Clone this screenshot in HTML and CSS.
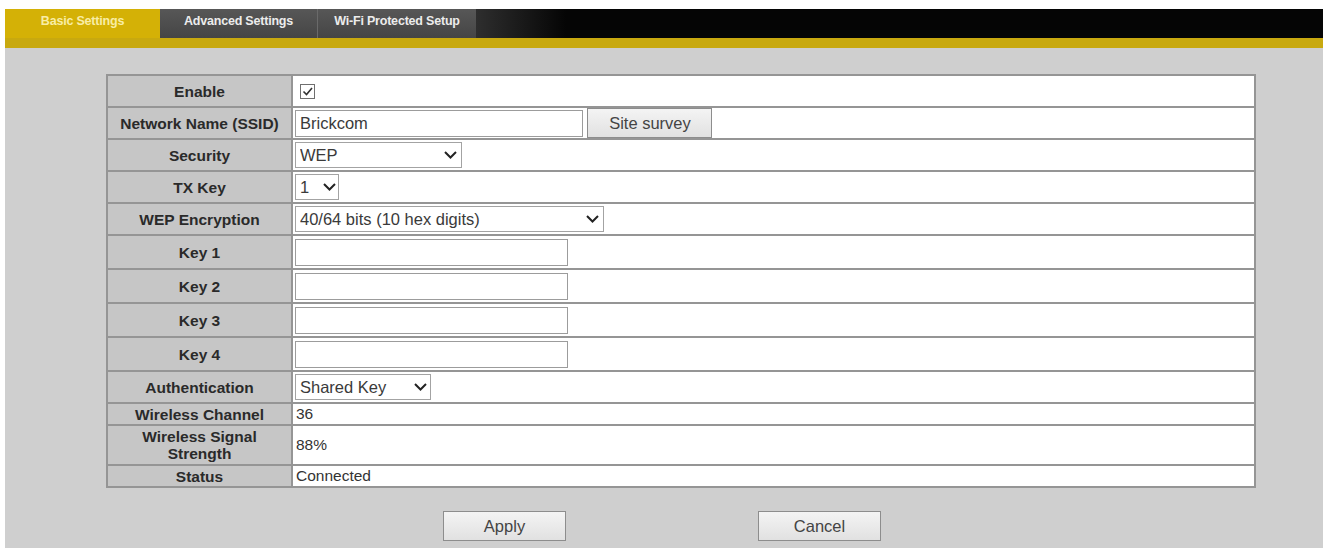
FILE: index.html
```html
<!DOCTYPE html>
<html lang="en">
  <head>
    <meta charset="UTF-8" />
    <title>Wireless - Basic Settings</title>
    <link rel="stylesheet" href="styles.css">
  </head>
  <body>
    <div class="tabs">
      <div class="tab tab-basic active">Basic Settings</div>
      <div class="tab tab-adv">Advanced Settings</div>
      <div class="tab tab-wps">Wi-Fi Protected Setup</div>
      <div class="tab-fill"></div>
    </div>

    <div class="panel">
      <table class="settings">
        <tr class="row-form">
          <th>Enable</th>
          <td>
            <span class="check">
              <svg width="13" height="13" viewBox="0 0 13 13">
                <path d="M2.5 6.5 L5.5 9.5 L11 3" fill="none" stroke="#333" stroke-width="1.6" />
              </svg>
            </span>
          </td>
        </tr>
        <tr class="row-form">
          <th>Network Name (SSID)</th>
          <td>
            <input class="field field-ssid" type="text" value="Brickcom" />
            <button class="btn btn-survey" type="button">Site survey</button>
          </td>
        </tr>
        <tr class="row-form">
          <th>Security</th>
          <td>
            <span class="select sel-security">
              <select><option>WEP</option></select>
              <svg width="13" height="8" viewBox="0 0 13 8"><path d="M1 1 L6.5 6.5 L12 1" fill="none" stroke="#222" stroke-width="2" /></svg>
            </span>
          </td>
        </tr>
        <tr class="row-form">
          <th>TX Key</th>
          <td>
            <span class="select sel-tx">
              <select><option>1</option></select>
              <svg width="13" height="8" viewBox="0 0 13 8"><path d="M1 1 L6.5 6.5 L12 1" fill="none" stroke="#222" stroke-width="2" /></svg>
            </span>
          </td>
        </tr>
        <tr class="row-form">
          <th>WEP Encryption</th>
          <td>
            <span class="select sel-wep">
              <select><option>40/64 bits (10 hex digits)</option></select>
              <svg width="13" height="8" viewBox="0 0 13 8"><path d="M1 1 L6.5 6.5 L12 1" fill="none" stroke="#222" stroke-width="2" /></svg>
            </span>
          </td>
        </tr>
        <tr class="row-key">
          <th>Key 1</th>
          <td><input class="field field-key" type="text" /></td>
        </tr>
        <tr class="row-key">
          <th>Key 2</th>
          <td><input class="field field-key" type="text" /></td>
        </tr>
        <tr class="row-key">
          <th>Key 3</th>
          <td><input class="field field-key" type="text" /></td>
        </tr>
        <tr class="row-key">
          <th>Key 4</th>
          <td><input class="field field-key" type="text" /></td>
        </tr>
        <tr class="row-form">
          <th>Authentication</th>
          <td>
            <span class="select sel-auth">
              <select><option>Shared Key</option></select>
              <svg width="13" height="8" viewBox="0 0 13 8"><path d="M1 1 L6.5 6.5 L12 1" fill="none" stroke="#222" stroke-width="2" /></svg>
            </span>
          </td>
        </tr>
        <tr class="row-info">
          <th>Wireless Channel</th>
          <td class="info">36</td>
        </tr>
        <tr class="row-signal">
          <th>Wireless Signal<br />Strength</th>
          <td class="info">88%</td>
        </tr>
        <tr class="row-info">
          <th>Status</th>
          <td class="info">Connected</td>
        </tr>
      </table>

      <div class="actions">
        <button class="btn btn-action" type="button">Apply</button>
        <button class="btn btn-action" type="button">Cancel</button>
      </div>
    </div>
  </body>
</html>
```

FILE: styles.css
```css
body {
  margin: 0;
  padding: 9px 0 8px 5px;
  background-color: #ffffff;
  font-family: "Liberation Sans", Arial, sans-serif;
}

/* tab bar */
.tabs {
  display: flex;
  height: 29px;
  border-bottom: 10px solid #c8a90f;
}
.tab {
  box-sizing: border-box;
  padding-top: 4px;
  text-align: center;
  font-size: 12.5px;
  font-weight: bold;
  line-height: 16px;
  letter-spacing: -0.2px;
  color: #ececec;
  background: linear-gradient(#575757, #454545);
}
.tab-basic {
  width: 155px;
}
.tab-adv {
  width: 158px;
  border-right: 1px solid #6a6a6a;
}
.tab-wps {
  width: 158px;
}
.tab.active {
  background: #d4b106;
  color: #f8eda6;
}
.tab-fill {
  flex: 1;
  background: linear-gradient(to right, #2e2e2e, #050505 90px);
}

/* content */
.panel {
  box-sizing: border-box;
  height: 500px;
  padding-top: 26px;
  background-color: #cfcfcf;
}
.settings {
  width: 1150px;
  margin-left: 101px;
  border-collapse: collapse;
  border: 2px solid #8f8f8f;
}
.settings th,
.settings td {
  border: 2px solid #959595;
  padding: 0;
}
.settings th {
  width: 183px;
  background-color: #c6c6c6;
  font-size: 15.5px;
  font-weight: bold;
  line-height: 17px;
  color: #2a2a2a;
  text-align: center;
}
.settings td {
  background-color: #ffffff;
  padding-left: 2px;
}
.row-form th {
  height: 30px;
}
.row-key th {
  height: 32px;
}
.row-info th {
  height: 20px;
}
.row-signal th {
  height: 38px;
}
.settings td.info {
  padding-left: 3px;
  font-size: 15.5px;
  color: #333333;
}

.check {
  display: inline-flex;
  align-items: center;
  justify-content: center;
  box-sizing: border-box;
  width: 15px;
  height: 15px;
  margin-left: 5px;
  border: 1px solid #6f6f6f;
  background: #fff;
  vertical-align: middle;
}

.field {
  box-sizing: border-box;
  height: 27px;
  padding: 0 4px;
  border: 1px solid #9c9c9c;
  font-family: "Liberation Sans", Arial, sans-serif;
  font-size: 16.5px;
  color: #3a3a3a;
  vertical-align: middle;
}
.field-key {
  width: 273px;
}
.field-ssid {
  width: 288px;
}

.select {
  position: relative;
  display: inline-block;
  vertical-align: middle;
}
.select select {
  appearance: none;
  box-sizing: border-box;
  height: 26px;
  padding: 0 0 0 4px;
  border: 1px solid #a3a3a3;
  border-radius: 0;
  background: #ffffff;
  font-family: "Liberation Sans", Arial, sans-serif;
  font-size: 16.5px;
  color: #3a3a3a;
}
.select svg {
  position: absolute;
  top: 9px;
  right: 5px;
  pointer-events: none;
}
.sel-security select {
  width: 167px;
}
.sel-tx select {
  width: 44px;
}
.sel-tx svg {
  right: 3px;
}
.sel-wep select {
  width: 309px;
}
.sel-auth select {
  width: 136px;
}
.sel-auth svg {
  right: 4px;
}

.btn {
  box-sizing: border-box;
  border: 1px solid #8d8d8d;
  border-radius: 0;
  background: linear-gradient(#f4f4f4, #e1e1e1);
  font-family: "Liberation Sans", Arial, sans-serif;
  font-size: 16.5px;
  color: #444444;
  vertical-align: middle;
}
.btn-survey {
  width: 125px;
  height: 30px;
  margin-left: 0;
}

.actions {
  display: flex;
  justify-content: center;
  gap: 192px;
  margin-top: 23px;
  padding-right: 4px;
}
.btn-action {
  width: 123px;
  height: 30px;
}
```
